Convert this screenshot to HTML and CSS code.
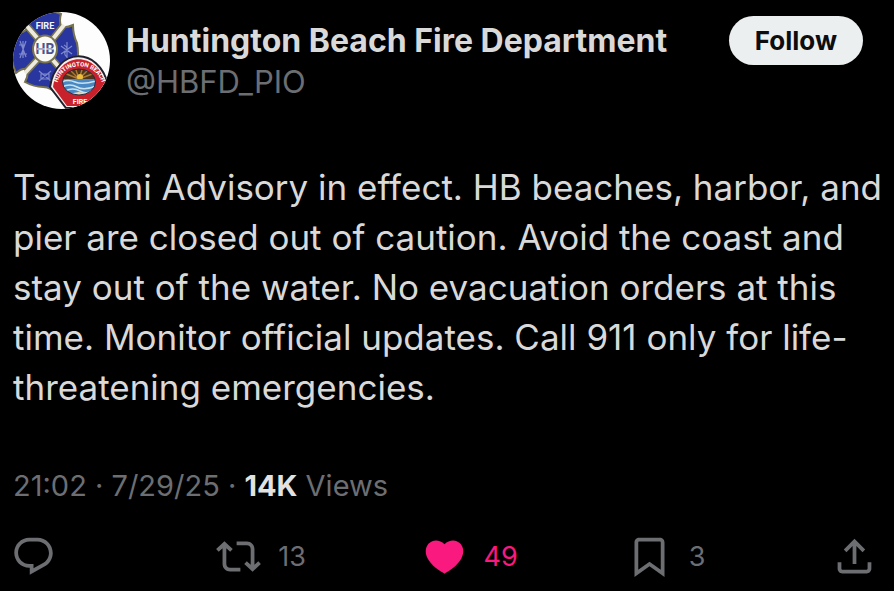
FILE: index.html
```html
<!DOCTYPE html>
<html lang="en">
<head>
<meta charset="utf-8">
<meta name="viewport" content="width=device-width, initial-scale=1">
<title>Huntington Beach Fire Department</title>
<link rel="stylesheet" href="styles.css">
</head>
<body>
<article class="post">
  <header class="header">
    <svg class="avatar" viewBox="0 0 97 97" aria-hidden="true">
      <defs>
        <clipPath id="disc"><circle cx="48.5" cy="48.500" r="48.500"/></clipPath>
        <clipPath id="scene"><ellipse cx="66" cy="70" rx="16.500" ry="13"/></clipPath>
        <path id="arc" d="M44 79C42 46 90 46 90 79"/>
      </defs>
      <g clip-path="url(#disc)">
        <rect width="97" height="97" fill="#fdfdfd"/>
        <!-- Maltese cross -->
        <path d="M10 6Q30 -6 48 2Q46 8 48 15Q54 16 60 13Q60 23 64 31Q67 47 61 59Q54 57 50 61Q50 67 56 73Q49 75 45 83Q38 75 30 75Q21 75 12 70Q16 63 14 57Q9 56 3 61Q-5 44 0 20Q9 22 14 17Q14 11 10 6Z" fill="#2a36a0" stroke="#77734f" stroke-width="2"/>
        <path d="M14 14L26 28M50 14L39 28M13 60L26 46M51 61L39 47" stroke="#77734f" stroke-width="7"/>
        <path d="M13 13L26 28M51 13L39 28M12 61L26 46M52 62L39 47" stroke="#eeeae0" stroke-width="4"/>
        <ellipse cx="32" cy="37" rx="13" ry="14.500" fill="#78734f"/>
        <ellipse cx="32" cy="37" rx="11" ry="12.500" fill="#f9f9f5"/>
        <text class="mark" x="32" y="42" text-anchor="middle">HB</text>
        <path d="M24 37H40" stroke="#f9f9f5" stroke-width="1.200"/>
        <text class="fire" x="32" y="17" text-anchor="middle">FIRE</text>
        <g fill="none" stroke="#7d89cc" stroke-width="1.200">
          <path d="M7 29L13 45M13 29L7 46M6 33H12M6 42H14M10 29V46"/>
          <path d="M54 30V46M48 34L59 42M59 34L48 42M51 33Q56 36 53 39T54 45"/>
          <path d="M26 59L38 69M38 59L26 69M28 62H36V67H28Z"/>
        </g>
        <!-- Shoulder patch -->
        <path d="M37 75C43 35 86 34 95 73L80 96H53Z" fill="#f6eeee" stroke="#20212c" stroke-width="2"/>
        <path d="M40 75C45 39 84 38 93 73L79 94H54Z" fill="#c9212b"/>
        <g clip-path="url(#scene)">
          <rect x="49" y="56" width="34" height="28" fill="#4b3420"/>
          <path d="M66 67L51 61M66 67L56 57M66 67L62 55M66 67L70 55M66 67L76 57M66 67L82 61" stroke="#ad7b2f" stroke-width="1.400"/>
          <circle cx="67" cy="65" r="3" fill="#edbd3d"/>
          <rect x="49" y="67" width="34" height="17" fill="#4a88c4"/>
          <path d="M49 70Q55 67 62 70T83 69M49 75Q57 71 64 75T83 74M52 79Q60 75 67 79T80 78" fill="none" stroke="#c6e3ef" stroke-width="1.600"/>
          <path d="M56 84Q65 76 77 84Z" fill="#e6d8b4"/>
        </g>
        <ellipse cx="66" cy="70" rx="16.500" ry="13" fill="none" stroke="#34283a" stroke-width="1"/>
        <text class="arc-label"><textPath href="#arc" startOffset="50%" text-anchor="middle">HUNTINGTON BEACH</textPath></text>
        <text class="patch-label" x="67" y="92" text-anchor="middle">FIRE</text>
      </g>
    </svg>
    <div class="identity">
      <h1 class="name">Huntington Beach Fire Department</h1>
      <a class="handle" href="#profile">@HBFD_PIO</a>
    </div>
    <button class="follow" type="button">Follow</button>
  </header>

  <p class="body">Tsunami Advisory in effect. HB beaches, harbor, and pier are closed out of caution. Avoid the coast and stay out of the water. No evacuation orders at this time. Monitor official updates. Call 911 only for life-threatening emergencies.</p>

  <p class="meta"><time>21:02 · 7/29/25</time> · <strong>14K</strong> Views</p>

  <footer class="actions">
    <button class="action" type="button" aria-label="Reply">
      <svg class="icon" viewBox="0 0 24 24"><path d="M1.751 10c0-4.420 3.584-8 8.005-8h4.366c4.490 0 8.129 3.640 8.129 8.130 0 2.960-1.607 5.680-4.196 7.110l-8.054 4.460v-3.690h-.067c-4.490.1-8.183-3.510-8.183-8.010zm8.005-6c-3.317 0-6.005 2.690-6.005 6 0 3.370 2.770 6.080 6.138 6.010l.351-.01h1.761v2.300l5.087-2.810c1.951-1.080 3.163-3.130 3.163-5.360 0-3.390-2.744-6.130-6.129-6.130H9.756z"/></svg>
    </button>
    <button class="action" type="button" aria-label="Repost, 13">
      <svg class="icon" viewBox="0 0 24 24"><path d="M4.500 3.880l4.432 4.140-1.364 1.460L5.500 7.550V16c0 1.100.896 2 2 2H13v2H7.500c-2.209 0-4-1.790-4-4V7.550L1.432 9.480.068 8.020 4.500 3.880zM16.500 6H11V4h5.500c2.209 0 4 1.790 4 4v8.450l2.068-1.930 1.364 1.460-4.432 4.140-4.432-4.140 1.364-1.460 2.068 1.930V8c0-1.100-.896-2-2-2z"/></svg>
      <span>13</span>
    </button>
    <button class="action liked" type="button" aria-label="Like, 49">
      <svg class="icon" viewBox="0 0 24 24"><path d="M20.884 13.190c-1.351 2.480-4.001 5.120-8.379 7.670l-.503.3-.504-.3c-4.379-2.550-7.029-5.190-8.382-7.670-1.360-2.500-1.410-4.860-.514-6.670.887-1.790 2.647-2.910 4.601-3.010 1.651-.09 3.368.56 4.798 2.010 1.429-1.450 3.146-2.100 4.796-2.010 1.954.1 3.714 1.220 4.601 3.010.896 1.810.846 4.170-.514 6.670z"/></svg>
      <span>49</span>
    </button>
    <button class="action" type="button" aria-label="Bookmark, 3">
      <svg class="icon" viewBox="0 0 24 24"><path d="M4 4.500C4 3.120 5.119 2 6.500 2h11C18.881 2 20 3.120 20 4.500v18.440l-8-5.710-8 5.710V4.500zM6.500 4c-.276 0-.5.22-.5.5v14.560l6-4.290 6 4.290V4.500c0-.28-.224-.5-.5-.5h-11z"/></svg>
      <span>3</span>
    </button>
    <button class="action" type="button" aria-label="Share">
      <svg class="icon" viewBox="0 0 24 24"><path d="M12 2.590l5.700 5.700-1.410 1.420L13 6.410V16h-2V6.410l-3.300 3.300-1.410-1.420L12 2.590zM21 15l-.02 3.510c0 1.380-1.120 2.490-2.500 2.490H5.500C4.110 21 3 19.880 3 18.500V15h2v3.500c0 .28.22.5.5.5h12.980c.28 0 .5-.22.5-.5L19 15h2z"/></svg>
    </button>
  </footer>
</article>
</body>
</html>
```
FILE: styles.css
```css
* {
  box-sizing: border-box;
}

body {
  margin: 0;
  background: #000;
  color: #d9d9d9;
  font-family: Inter, "Liberation Sans", sans-serif;
}

.post {
  padding: 12px 0;
}

.header {
  display: flex;
  align-items: center;
  padding: 0 31px 0 13px;
}

.avatar {
  flex: none;
  width: 97px;
  height: 97px;
  margin-right: 16px;
}

.mark {
  font: 700 14px Roboto, sans-serif;
  fill: #4a5290;
}

.fire {
  font: 700 9px Roboto, sans-serif;
  fill: #f4f4ff;
}

.arc-label {
  font: 700 6px Roboto, sans-serif;
  fill: #fff;
}

.patch-label {
  font: 700 7px Roboto, sans-serif;
  fill: #fff;
}

.identity {
  display: flex;
  flex: 1;
  flex-direction: column;
  align-items: flex-start;
  min-width: 0;
}

.name {
  margin: 0;
  font-size: 32px;
  font-weight: 700;
  line-height: 41px;
}

.handle {
  color: #6c6e72;
  font-size: 31px;
  line-height: 41px;
  text-decoration: none;
}

.follow {
  flex: none;
  align-self: flex-start;
  height: 49px;
  margin-top: 4px;
  padding: 0 26px;
  border: 0;
  border-radius: 25px;
  background: #eceff0;
  color: #0b0d10;
  font: 700 26px Inter, "Liberation Sans", sans-serif;
}

.body {
  margin: 53px 0 0;
  padding: 0 8px 0 13px;
  font-size: 35px;
  line-height: 50px;
}

.meta {
  margin: 54px 0 0;
  padding: 0 13px;
  color: #6c6e72;
  font-size: 29px;
  line-height: 40px;
}

.meta strong {
  color: #e2e2e2;
  font-weight: 700;
}

.actions {
  display: grid;
  grid-template-columns: repeat(4, 1fr) 45px;
  margin-top: 28px;
  padding: 0 17px 0 11px;
}

.action {
  display: flex;
  align-items: center;
  gap: 17px;
  padding: 0;
  border: 0;
  background: none;
  color: #6c6e72;
  font: 400 27px Inter, "Liberation Sans", sans-serif;
}

.liked {
  color: #f9197f;
}

.icon {
  flex: none;
  width: 45px;
  height: 45px;
  fill: currentColor;
}
```
